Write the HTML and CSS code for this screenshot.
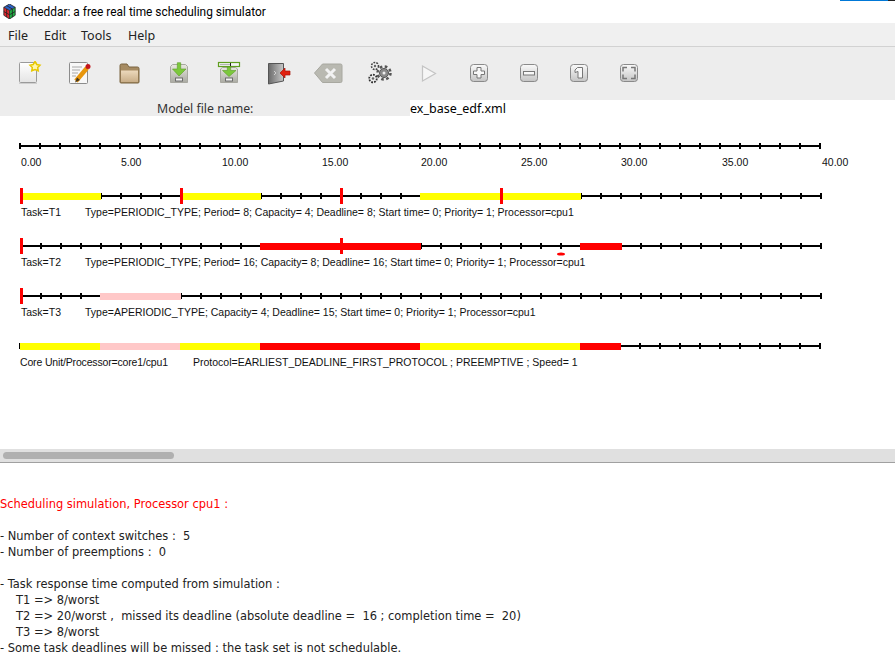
FILE: index.html
```html
<!DOCTYPE html>
<html lang="en">
<head>
    <meta charset="UTF-8">
    <title>Cheddar: a free real time scheduling simulator</title>
    <link rel="stylesheet" href="styles.css">
</head>
<body>

<div class="behind-window"></div>

<div class="titlebar">
    <svg class="app-icon" viewBox="0 0 16 16" preserveAspectRatio="none">
        <polygon points="8,0 15,3.500 8,7 1,3.500" fill="#2a62c8"/>
        <polygon points="1,3.500 8,7 8,16 1,12" fill="#e0262e"/>
        <polygon points="15,3.500 8,7 8,16 15,12" fill="#22ad44"/>
        <path d="M8 0 15 3.500V12L8 16 1 12V3.500ZM1 3.500 8 7 15 3.500M8 7V16M4.500 1.800 11.500 5.300M4.500 5.300V14M11.500 5.300V14M1 8 8 11.500 15 8" fill="none" stroke="#222" stroke-width=".9"/>
    </svg>
    <span>Cheddar: a free real time scheduling simulator</span>
</div>

<div class="menubar">
    <span class="menu menu-file">File</span>
    <span class="menu menu-edit">Edit</span>
    <span class="menu menu-tools">Tools</span>
    <span class="menu menu-help">Help</span>
</div>

<div class="toolbar">
    <svg class="tool" viewBox="0 0 32 24">
        <rect x="6.500" y="1.500" width="17" height="20" rx="1" fill="url(#paper)" stroke="#9a9a9a"/>
        <path d="M6 22.500H24" stroke="#cfcfcf"/>
        <polygon points="22,.500 23.800,3.500 27,4.200 24.700,6.600 25.200,9.800 22,8.500 18.800,9.800 19.300,6.600 17,4.200 20.200,3.500" fill="#fff6b0" stroke="#e8c800" stroke-width="1.500"/>
    </svg>
    <svg class="tool" viewBox="0 0 32 24">
        <rect x="6.500" y="1.500" width="18" height="21" rx="1" fill="#f8f8f8" stroke="#8c8c8c"/>
        <path d="M9 6H19M9 9H17M9 12H15M9 15H13" stroke="#a8a8a8"/>
        <path d="M13 20 24 7" stroke="#e8960c" stroke-width="4.500"/>
        <path d="M12 21.500 14 16.500 17 19Z" fill="#4a3a20"/>
        <circle cx="25" cy="5.500" r="2.500" fill="#c4161c"/>
    </svg>
    <svg class="tool" viewBox="0 0 32 24">
        <path d="M7 21V4.500Q7 3 8.500 3H14L16 6H24.500Q26 6 26 7.500V21Q26 22 25 22H8Q7 22 7 21Z" fill="#a68b62" stroke="#7b6440"/>
        <path d="M8 9.500H25V21H8Z" fill="url(#tan)"/>
    </svg>
    <svg class="tool" viewBox="0 0 32 24">
        <path d="M9.500 3.500H22.500L24.500 5.500V21.500H7.500V5.500Z" fill="url(#cabinet)" stroke="#a8a8a0"/>
        <rect x="12.500" y="17" width="7" height="3" fill="#f4f4f4" stroke="#6c6c6c"/>
        <polygon points="14.300,1.700 17.700,1.700 17.700,8 23,8 16,15 9.500,8 14.300,8" fill="#7cc83c" stroke="#5a9e26" stroke-width=".6"/>
    </svg>
    <svg class="tool" viewBox="0 0 32 24">
        <path d="M9.500 6.500H22.500L24.500 8V21.500H7.500V8Z" fill="url(#cabinet)" stroke="#a8a8a0"/>
        <rect x="12.500" y="17" width="7" height="3" fill="#f4f4f4" stroke="#6c6c6c"/>
        <polygon points="14.300,6 17.700,6 17.700,9.500 23,9.500 16,15.500 9.500,9.500 14.300,9.500" fill="#7cc83c" stroke="#5a9e26" stroke-width=".6"/>
        <rect x="5.500" y="1.500" width="21" height="4" fill="#f4f4f4" stroke="#5f9e1e" stroke-width="1.200"/>
        <path d="M7 3.500H17" stroke="#b4b4b4"/><path d="M17.500 2V5" stroke="#222"/>
    </svg>
    <svg class="tool" viewBox="0 0 32 24">
        <polygon points="5.500,2.500 20.500,2.500 20.500,20 5.500,23" fill="url(#door)" stroke="#555"/>
        <path d="M11 10 13 12 11 14" fill="none" stroke="#cfcfcf"/>
        <polygon points="17,12 22,7 22,10 27,10 27,14 22,14 22,17" fill="#e02010" stroke="#a81408" stroke-width=".7"/>
    </svg>
    <svg class="tool" viewBox="0 0 32 24">
        <path d="M1.500 12 9.500 3H27.500Q29 3 29 4.500V20Q29 21.500 27.500 21.500H9.500Z" fill="#b9b9b1" stroke="#a8a8a0"/>
        <path d="M13 8 22 17M22 8 13 17" stroke="#f2f2f2" stroke-width="3"/>
    </svg>
    <svg class="tool" viewBox="0 0 32 24">
        <circle cx="21" cy="12" r="6.500" fill="none" stroke="#555" stroke-width="2.500" stroke-dasharray="2.600 2.500"/>
        <circle cx="21" cy="12" r="4.500" fill="#8a8a8a" stroke="#555"/>
        <circle cx="21" cy="12" r="1.500" fill="#eee"/>
        <circle cx="12" cy="5" r="3.500" fill="#eee" stroke="#444" stroke-width="1.600" stroke-dasharray="1.800 1.100"/>
        <circle cx="12" cy="5" r="1.200" fill="#666"/>
        <circle cx="10" cy="17.500" r="3.800" fill="#eee" stroke="#333" stroke-width="1.800" stroke-dasharray="1.800 1.100"/>
        <circle cx="10" cy="17.500" r="1.300" fill="#666"/>
    </svg>
    <svg class="tool" viewBox="0 0 32 24">
        <polygon points="9.500,5 22.500,12.500 9.500,20" fill="#f6f6f6" stroke="#c4c4c4" stroke-width="1.200"/>
    </svg>
    <svg class="tool" viewBox="0 0 32 24">
        <rect x="7.500" y="3.500" width="17" height="17" rx="3" class="round-btn"/>
        <path d="M14 6.500H18V10H21.500V13.500H18V17H14V13.500H10.500V10H14Z" fill="#f8f8f8" stroke="#777"/>
    </svg>
    <svg class="tool" viewBox="0 0 32 24">
        <rect x="7.500" y="3.500" width="17" height="17" rx="3" class="round-btn"/>
        <rect x="10.500" y="10.500" width="11" height="3.500" fill="#f8f8f8" stroke="#777"/>
    </svg>
    <svg class="tool" viewBox="0 0 32 24">
        <rect x="7.500" y="3.500" width="17" height="17" rx="3" class="round-btn"/>
        <path d="M14.500 6.500H19.500V17H15V10.500L12 11.500V9Z" fill="#f8f8f8" stroke="#777"/>
    </svg>
    <svg class="tool" viewBox="0 0 32 24">
        <rect x="7.500" y="3.500" width="17" height="17" rx="3" class="round-btn"/>
        <path d="M14 6.500H10V10.500M18 6.500H22V10.500M14 17.500H10V13.500M18 17.500H22V13.500" fill="none" stroke="#777" stroke-width="1.500"/>
    </svg>
</div>

<div class="model-row">
    <div class="model-label">Model file name:</div>
    <div class="model-value">ex_base_edf.xml</div>
</div>

<svg class="chart" viewBox="0 116 895 333">
    <!-- time axis -->
    <line class="axis" x1="19" x2="821" y1="146" y2="146"/>
    <line class="ticks" x1="19" x2="822" y1="146" y2="146"/>
    <text x="21" y="166">0.00</text>
    <text x="121" y="166">5.00</text>
    <text x="222" y="166">10.00</text>
    <text x="322" y="166">15.00</text>
    <text x="421" y="166">20.00</text>
    <text x="521" y="166">25.00</text>
    <text x="621" y="166">30.00</text>
    <text x="722" y="166">35.00</text>
    <text x="822" y="166">40.00</text>

    <!-- T1 -->
    <line class="axis" x1="20" x2="822" y1="196" y2="196"/>
    <line class="ticks" x1="20" x2="823" y1="196" y2="196"/>
    <rect class="yellow" x="23" y="193" width="78" height="7"/>
    <rect class="yellow" x="183" y="193" width="78" height="7"/>
    <rect class="yellow" x="420" y="193" width="161" height="7"/>
    <rect class="red" x="20" y="188" width="3" height="16"/>
    <rect class="red" x="180" y="188" width="3" height="16"/>
    <rect class="red" x="340" y="188" width="3" height="16"/>
    <rect class="red" x="500" y="188" width="3" height="16"/>
    <text x="21" y="216">Task=T1</text>
    <text x="85" y="216">Type=PERIODIC_TYPE; Period= 8; Capacity= 4; Deadline= 8; Start time= 0; Priority= 1; Processor=cpu1</text>

    <!-- T2 -->
    <line class="axis" x1="20" x2="822" y1="246" y2="246"/>
    <line class="ticks" x1="20" x2="823" y1="246" y2="246"/>
    <rect class="red" x="260" y="243" width="161" height="7"/>
    <rect class="red" x="580" y="243" width="42" height="7"/>
    <rect class="red" x="20" y="238" width="3" height="16"/>
    <rect class="red" x="340" y="238" width="3" height="16"/>
    <ellipse class="red blob" cx="561" cy="254" rx="4" ry="1.600"/>
    <text x="21" y="266">Task=T2</text>
    <text x="85" y="266">Type=PERIODIC_TYPE; Period= 16; Capacity= 8; Deadline= 16; Start time= 0; Priority= 1; Processor=cpu1</text>

    <!-- T3 -->
    <line class="axis" x1="20" x2="822" y1="296" y2="296"/>
    <line class="ticks" x1="20" x2="823" y1="296" y2="296"/>
    <rect class="pink" x="100" y="293" width="81" height="7"/>
    <rect class="red" x="20" y="288" width="3" height="16"/>
    <text x="21" y="316">Task=T3</text>
    <text x="85" y="316">Type=APERIODIC_TYPE; Capacity= 4; Deadline= 15; Start time= 0; Priority= 1; Processor=cpu1</text>

    <!-- processor -->
    <line class="axis" x1="19" x2="821" y1="346" y2="346"/>
    <line class="ticks" x1="19" x2="822" y1="346" y2="346"/>
    <rect class="yellow" x="20" y="343" width="80" height="7"/>
    <rect class="pink" x="100" y="343" width="80" height="7"/>
    <rect class="yellow" x="180" y="343" width="80" height="7"/>
    <rect class="red" x="260" y="343" width="160" height="7"/>
    <rect class="yellow" x="420" y="343" width="160" height="7"/>
    <rect class="red" x="580" y="343" width="41" height="7"/>
    <text x="20" y="366" textLength="148">Core Unit/Processor=core1/cpu1</text>
    <text x="193" y="366">Protocol=EARLIEST_DEADLINE_FIRST_PROTOCOL ; PREEMPTIVE ; Speed= 1</text>
</svg>

<div class="scrollbar"><div class="scroll-thumb"></div></div>

<div class="console">
    <p class="console-title">Scheduling simulation, Processor cpu1 :</p>
    <p class="gap">- Number of context switches :&nbsp; 5</p>
    <p>- Number of preemptions :&nbsp; 0</p>
    <p class="gap">- Task response time computed from simulation :</p>
    <p class="indent">T1 =&gt; 8/worst</p>
    <p class="indent">T2 =&gt; 20/worst ,&nbsp; missed its deadline (absolute deadline =&nbsp; 16 ; completion time =&nbsp; 20)</p>
    <p class="indent">T3 =&gt; 8/worst</p>
    <p>- Some task deadlines will be missed : the task set is not schedulable.</p>
</div>

<!-- gradients shared by the toolbar icons -->
<svg class="defs" width="0" height="0">
    <defs>
        <linearGradient id="paper" x1="0" y1="0" x2="0" y2="1"><stop offset="0" stop-color="#fff"/><stop offset="1" stop-color="#e4e4e4"/></linearGradient>
        <linearGradient id="tan" x1="0" y1="0" x2="0" y2="1"><stop offset="0" stop-color="#ecd9bc"/><stop offset="1" stop-color="#c9ae88"/></linearGradient>
        <linearGradient id="cabinet" x1="0" y1="0" x2="0" y2="1"><stop offset="0" stop-color="#e8e8e0"/><stop offset="1" stop-color="#aaaaa2"/></linearGradient>
        <linearGradient id="door" x1="0" y1="0" x2="1" y2="0"><stop offset="0" stop-color="#6a6a6a"/><stop offset="1" stop-color="#c8c8c8"/></linearGradient>
        <linearGradient id="btn" x1="0" y1="0" x2="0" y2="1"><stop offset="0" stop-color="#fafafa"/><stop offset="1" stop-color="#c4c4c4"/></linearGradient>
    </defs>
</svg>

</body>
</html>
```

FILE: styles.css
```css
html, body {
    margin: 0;
    padding: 0;
}
body {
    width: 895px;
    height: 668px;
    overflow: hidden;
    position: relative;
    background: #FFF;
    color: #000;
    font-family: "Noto Sans", "Open Sans", sans-serif;
}

.behind-window {
    position: absolute;
    top: 0;
    left: 840px;
    width: 48px;
    height: 1px;
    background: #0078D7;
    border-right: 7px solid #222;
}

.titlebar {
    height: 23px;
    display: flex;
    align-items: center;
    padding-left: 3px;
    font-family: Roboto, sans-serif;
    font-size: 11.900px;
}
.app-icon {
    width: 13px;
    height: 15px;
    margin-right: 7px;
}

.menubar {
    height: 23px;
    background: #F0F0F0;
    border-bottom: 1px solid #D2D2D2;
    position: relative;
    font-size: 12.500px;
    color: #222;
}
.menu {
    position: absolute;
    top: 4px;
}
.menu-file { left: 8px; }
.menu-edit { left: 44px; }
.menu-tools { left: 81px; }
.menu-help { left: 128px; }

.toolbar {
    height: 39px;
    padding: 14px 0 0 13px;
    display: flex;
    gap: 18px;
    background: #EDEDED;
}
.tool {
    width: 32px;
    height: 24px;
    flex: none;
}
.round-btn {
    fill: url(#btn);
    stroke: #8A8A8A;
}

.model-row {
    height: 16px;
    display: flex;
    font-size: 12.500px;
    line-height: 17px;
}
.model-label {
    width: 253px;
    padding-left: 157px;
    background: #EDEDED;
    color: #333;
    font-size: 12.300px;
}

.chart {
    display: block;
    width: 895px;
    height: 333px;
    shape-rendering: crispEdges;
}
.chart text {
    font-family: "Liberation Sans", Arial, sans-serif;
    font-size: 10.500px;
    fill: #111;
}
.axis {
    stroke: #000;
    stroke-width: 2;
}
.ticks {
    stroke: #000;
    stroke-width: 6;
    stroke-dasharray: 2 18;
}
.yellow { fill: #FFFF00; }
.red { fill: #FF0000; }
.pink { fill: #FFC8C8; }
.blob { shape-rendering: geometricPrecision; }

.scrollbar {
    height: 13px;
    background: #E0E0E0;
    border-bottom: 1px solid #A0A0A0;
}
.scroll-thumb {
    position: relative;
    top: 3px;
    left: 3px;
    width: 171px;
    height: 7px;
    border-radius: 4px;
    background: #B0B0B0;
}

.console {
    padding-top: 33px;
    font-family: "DejaVu Sans", sans-serif;
    font-size: 11.450px;
    line-height: 16px;
    color: #222;
}
.console p {
    margin: 0;
}
.console .console-title {
    color: #FF0000;
}
.console .gap {
    margin-top: 16px;
}
.console .indent {
    padding-left: 16px;
}

.defs {
    position: absolute;
}
```
